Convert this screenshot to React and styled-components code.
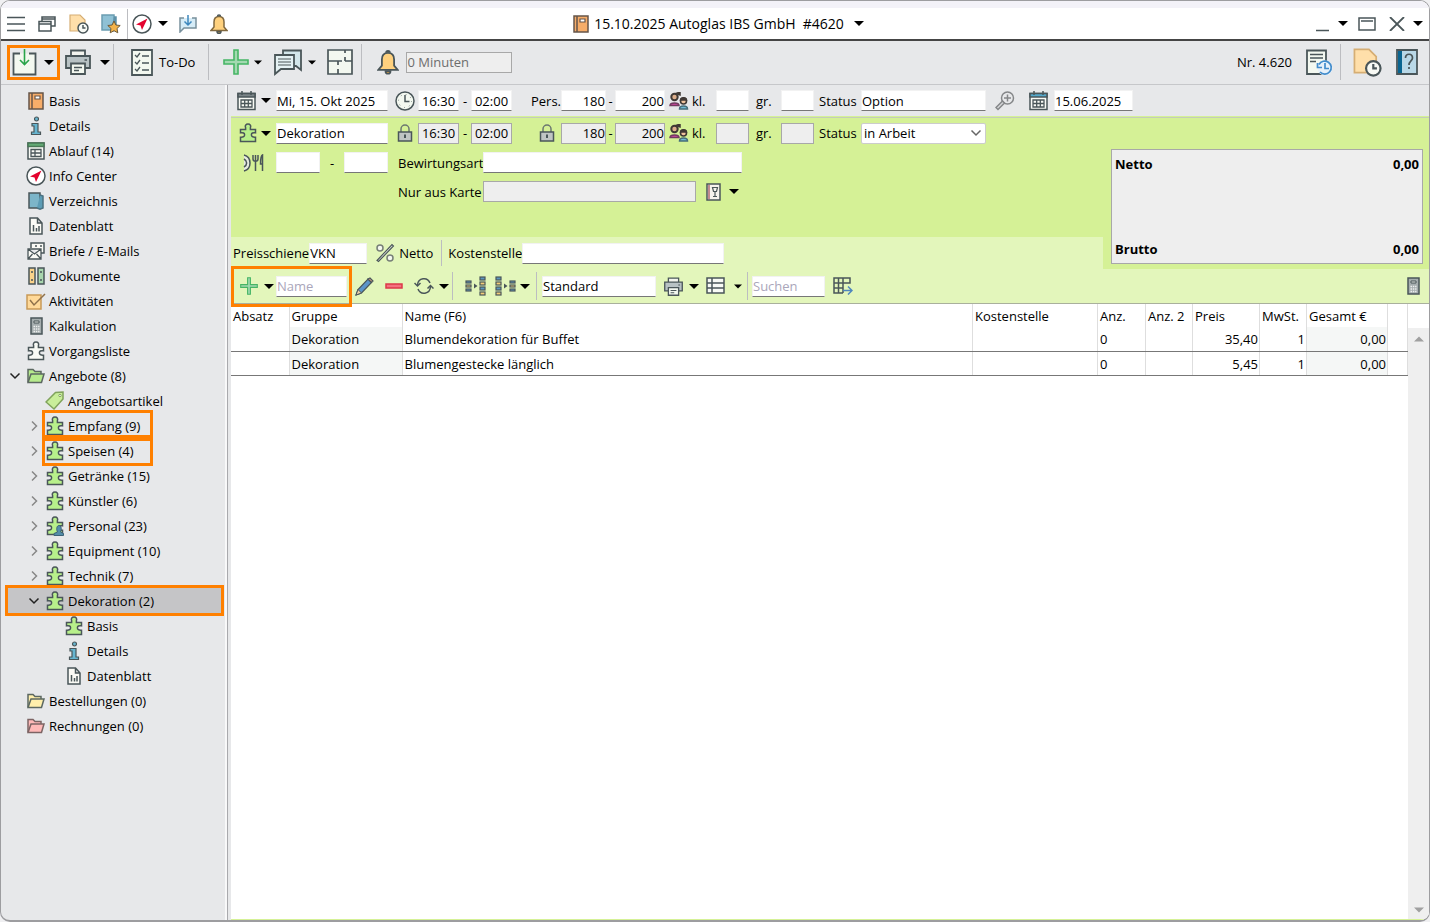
import React, { useState } from 'react';
import styled, { createGlobalStyle, css } from 'styled-components';

const GlobalStyle = createGlobalStyle`
  * {
    box-sizing: border-box;
  }

  body {
    margin: 0;
    background: #f0f0f2;
    color: #000;
    font-family: "Open Sans", "Noto Sans", sans-serif;
    font-size: 13px;
    line-height: 18px;
  }

  button, input, select {
    font: inherit;
    color: inherit;
  }

  svg {
    flex: none;
  }
`;

const ink = '#4a5659';
const orange = '#ff8000';

const Window = styled.div`
  min-height: 100vh;
  display: flex;
  flex-direction: column;
  border: 1px solid #9d9da0;
  border-bottom-width: 2px;
  border-radius: 10px;
  overflow: hidden;
  background: #e7e8ea;
`;

const TitleBar = styled.header`
  display: grid;
  grid-template-columns: 1fr auto 1fr;
  align-items: center;
  height: 40px;
  border-top: 7px solid #f3f2f8;
  border-bottom: 2px solid #454545;
  background: #fff;
`;

const BarGroup = styled.div`
  display: flex;
  align-items: center;
  justify-content: ${({ $end }) => ($end ? 'flex-end' : 'flex-start')};
`;

const Title = styled.h1`
  display: flex;
  align-items: center;
  gap: 5px;
  margin: 0;
  padding-left: 12px;
  font-size: 14px;
  font-weight: 400;
  white-space: pre;
`;

const IconButton = styled.button`
  display: inline-flex;
  flex: none;
  align-items: center;
  justify-content: center;
  width: ${({ $w }) => $w || 20}px;
  height: 28px;
  padding: 0;
  border: 0;
  background: none;
  cursor: pointer;
`;

const Divider = styled.span`
  flex: none;
  width: 1px;
  height: ${({ $h }) => $h || 36}px;
  background: #bcbdc1;
`;

const Toolbar = styled.div`
  display: flex;
  align-items: center;
  justify-content: space-between;
  height: 44px;
  padding-bottom: 1px;
  border-bottom: 1px solid #c6c7ca;
`;

const ToolGroup = styled.div`
  display: flex;
  align-items: center;
  gap: ${({ $gap }) => $gap || 0}px;
  padding: 0 ${({ $pad }) => $pad || 0}px;
  padding-left: ${({ $pad, $left }) => $left || $pad || 0}px;
`;

const SaveBox = styled.div`
  display: flex;
  align-items: center;
  height: 35px;
  margin-left: 6px;
  border: 3px solid ${orange};
`;

const TextButton = styled.button`
  display: flex;
  align-items: center;
  gap: ${({ $gap }) => $gap || 6}px;
  padding: 0;
  border: 0;
  background: none;
  cursor: pointer;
`;

const Body = styled.div`
  flex: 1;
  display: flex;
`;

const Sidebar = styled.nav`
  flex: none;
  width: 227px;
  padding-top: 3px;
  border-right: 1px solid #a9a9ad;
  box-shadow: inset -2px 0 #f8f8f9;
`;

const Tree = styled.ul`
  margin: 0;
  padding: 0;
  list-style: none;
`;

const TreeRow = styled.li`
  display: flex;
  align-items: center;
  height: 25px;
  margin: 0 6px 0 7px;
  padding-left: ${({ $level }) => $level * 19}px;
  ${({ $active }) => $active && css`
    background: #c5c5c7;
    outline: 3px solid ${orange};
  `}
`;

const Expander = styled.button`
  display: flex;
  align-items: center;
  width: 18px;
  height: 20px;
  padding: 0 0 0 1px;
  border: 0;
  background: none;
`;

const TreeLink = styled.a`
  display: flex;
  align-items: center;
  height: 25px;
  color: #000;
  text-decoration: none;
  white-space: nowrap;
  ${({ $marked }) => $marked && css`
    min-width: 105px;
    outline: 3px solid ${orange};
  `}
`;

const TreeIcon = styled.span`
  display: flex;
  justify-content: center;
  width: 20px;
  margin-right: 3px;
`;

const Main = styled.main`
  flex: 1;
  min-width: 0;
  display: flex;
  flex-direction: column;
  margin-left: 3px;
`;

const FieldGrid = styled.div`
  display: grid;
  grid-template-columns:
    20px 20px 112px 30px 41px 12px 41px 49px 45px 9px 50px 27px 24px 33px
    32px 33px 47px 125px 37px 31px 79px;
  align-items: center;
  height: ${({ $h }) => $h}px;
  padding-left: 5px;
  white-space: nowrap;
`;

const Cell = styled.span`
  display: flex;
  align-items: center;
  justify-content: ${({ $align }) => $align || 'center'};
  padding-left: ${({ $left }) => $left || 0}px;
`;

const Label = styled.label`
  padding-left: ${({ $pad }) => $pad || 0}px;
  text-align: ${({ $align }) => $align || 'left'};
  white-space: nowrap;
`;

const Field = styled.input`
  width: ${({ $w }) => ($w ? `${$w}px` : '100%')};
  min-width: 0;
  height: 21px;
  padding: 0;
  border: 1px solid #f2f2f2;
  border-bottom-color: #777;
  border-radius: 0;
  background: #fff;
  outline: none;
  text-align: ${({ $align }) => $align || 'left'};

  &::placeholder {
    color: #aaa6ba;
    opacity: 1;
  }

  &:read-only {
    border-color: #a8a8a8;
    background: #eeeeee;
  }
`;

const ReminderField = styled(Field)`
  color: #6d6d6d;
  margin-left: 2px;
`;

const SelectBox = styled.span`
  display: grid;
  align-items: center;

  select, svg {
    grid-area: 1 / 1;
  }

  svg {
    justify-self: end;
    margin-right: 4px;
    pointer-events: none;
  }
`;

const Select = styled.select`
  width: 100%;
  height: 21px;
  padding: 0 2px;
  border: 1px solid #ccc;
  border-radius: 2px;
  background: #fff;
  appearance: none;
`;

const OfferPanel = styled.section`
  display: grid;
  grid-template-columns: minmax(0, 1fr) 326px;
  background: #d5f196;
  border-top: 1px solid #d5f196;
`;

const OfferFields = styled.div`
  display: flex;
  flex-direction: column;
  border-top: 1px solid #c4cdb8;
`;

const CateringGrid = styled.div`
  display: grid;
  grid-template-columns: 45px 112px 95px 1fr;
  grid-auto-rows: 29px;
  align-items: center;
  height: 89px;
`;

const TimeSpan = styled.div`
  display: flex;
  align-items: center;
  justify-content: space-between;
`;

const PriceBar = styled.div`
  display: flex;
  align-items: center;
  height: 32px;
  padding-left: 2px;
  background: #e3f6bb;
`;

const SummaryWrap = styled.div`
  display: flex;
  padding: 31px 6px 5px 8px;
  border-top: 1px solid #c4cdb8;
`;

const Summary = styled.dl`
  flex: 1;
  display: grid;
  grid-template-columns: 1fr auto;
  align-content: space-between;
  margin: 0;
  padding: 5px 3px;
  border: 1px solid #a8a8a8;
  background: #eeeeee;
  font-weight: 700;

  dd {
    margin: 0;
  }
`;

const ItemBar = styled.div`
  display: flex;
  align-items: center;
  justify-content: space-between;
  height: 35px;
  border-bottom: 1px solid #a9b09c;
  background: #e3f6bb;
`;

/* the outline has to stay above the table below */
const AddBox = styled.div`
  position: relative;
  z-index: 1;
  display: flex;
  align-items: center;
  width: 115px;
  height: 35px;
  margin: 0 3px;
  padding-left: 2px;
  outline: 3px solid ${orange};
`;

const TableArea = styled.div`
  flex: 1;
  display: grid;
  grid-template-columns: minmax(0, 1fr) 21px;
  background: #fff;
  border-bottom: 1px solid #d5f196;
`;

const Table = styled.table`
  align-self: start;
  width: 100%;
  table-layout: fixed;
  border-collapse: collapse;

  th, td {
    height: 24px;
    padding: 1px 2px 0;
    border-right: 1px solid #dedede;
    text-align: left;
    font-weight: 400;
    white-space: nowrap;
  }

  th {
    height: 23px;
  }

  td {
    border-bottom: 1px solid #777;
  }

  td:nth-child(2), td:nth-child(9) {
    background: #f5f7f6;
  }

  td:nth-child(n + 7) {
    padding-right: 1px;
    text-align: right;
  }
`;

const ScrollTrack = styled.div`
  display: flex;
  flex-direction: column;
  justify-content: space-between;
  align-items: center;
  margin-top: 24px;
  padding: 7px 0 5px;
  background: #efefef;
`;

const Drawing = ({ w = 18, h = w, box, children }) => (
  <svg
    width={w}
    height={h}
    viewBox={box || `0 0 ${w} ${h}`}
    fill="none"
    stroke={ink}
    strokeWidth="1.5"
    aria-hidden="true"
  >
    {children}
  </svg>
);

const Triangle = ({ up, small, color = '#000' }) => (
  <Drawing w={small ? 8 : 10} h={up === undefined ? 5 : 8} box="0 0 10 5">
    <path d={up ? 'M5 0L10 5H0z' : 'M0 0H10L5 5z'} fill={color} stroke="none" />
  </Drawing>
);

const Caret = ({ w = 16, small, label = 'Auswahl' }) => (
  <IconButton $w={w} aria-label={label}><Triangle small={small} /></IconButton>
);

const Clock = ({ x, y, r = 6, color = ink }) => (
  <g stroke={color}>
    <circle cx={x} cy={y} r={r} fill="#f8faf5" />
    <path d={`M${x} ${y - r + 2}V${y}H${x + r - 2.5}`} />
  </g>
);

const Menu = () => (
  <Drawing w={18} h={16}><path d="M0 1.5H18M0 8H18M0 14.5H18" /></Drawing>
);

const Windows = () => (
  <Drawing w={18} h={16}>
    <path d="M4 5V1H17V10H13M4 3H17" />
    <path d="M1 5.5H13V15H1zM1 8H13" fill="#fff" />
  </Drawing>
);

const FolderClock = ({ size = 20 }) => (
  <Drawing w={size} box="0 0 20 20">
    <path d="M1 1H11L16 6V17H1z" fill="#ffdfaa" stroke="#d6ae74" strokeWidth="1.2" />
    <Clock x={14} y={14} r={5} />
  </Drawing>
);

const BookStar = () => (
  <Drawing w={20}>
    <path d="M1 1H13V16H1z" fill="#8fc1d5" stroke="#6b9db1" />
    <path d="M13 3h2v12l-3 2-2-1" fill="#5e91a8" stroke="#5e91a8" />
    <path d="M13 7l1.9 4 4.3.5-3.2 3 .8 4.3-3.8-2.1-3.8 2.1.8-4.3-3.2-3 4.3-.5z" fill="#f3b34a" stroke="#6b5a3b" strokeWidth="1" />
  </Drawing>
);

const Compass = () => (
  <Drawing w={20}>
    <circle cx="10" cy="10" r="9" fill="#fff" />
    <path d="M15.5 4.5L4 10.5l4.5 1 1.5 4.5z" fill="#e4032e" stroke="none" />
  </Drawing>
);

const Inbox = () => (
  <Drawing w={18}>
    <path d="M5 3H1V17l4-4H17V3H13" fill="#d6ecf7" stroke="#78909c" />
    <path d="M9 0V10M5.5 6.5L9 10l3.5-3.5" stroke="#3d87bd" />
  </Drawing>
);

const Bell = ({ w = 18, h = 20 }) => (
  <Drawing w={w} h={h} box="0 0 18 20">
    <path d="M7 17.5a2 2 0 0 0 4 0z" fill="#e7a443" />
    <path d="M9 2.5C5.5 2.5 4 5 4 8V13L1 16.5H17L14 13V8C14 5 12.5 2.5 9 2.5z" fill="#ffd17e" stroke={w > 18 ? ink : '#80683f'} />
    <path d="M7.5 2.5a1.5 1.5 0 0 1 3 0" />
  </Drawing>
);

const Book = () => (
  <Drawing w={16} h={18}>
    <path d="M1 1H15V17H1z" fill="#f7ad69" stroke="#65554a" />
    <path d="M4 1V17" stroke="#65554a" />
    <path d="M7 4H12V7H7z" fill="#fff" stroke="#65554a" strokeWidth="1.2" />
  </Drawing>
);

const Save = () => (
  <Drawing w={26} h={28}>
    <path d="M8 5.5H1.5V26.5H23.5V5.5H17" fill="#f3f8f0" strokeWidth="1.8" />
    <path d="M12.5 1V16M8 12l4.500 4.500L17 12" stroke="#29a44a" strokeWidth="1.6" />
  </Drawing>
);

const Printer = ({ w = 26, h = 26 }) => (
  <Drawing w={w} h={h} box="0 0 26 26">
    <path d="M6 7V1.5H20V7" fill="#f3f4ee" strokeWidth="1.8" />
    <path d="M1 7H25V19H1z" fill="#b8c2c4" strokeWidth="1.8" />
    <path d="M6 14.5H20V25H6z" fill="#f3f8f0" strokeWidth="1.8" />
    <path d="M9 18.5H17M9 21.5H14M19.5 11H22" strokeWidth="1.6" />
  </Drawing>
);

const Checklist = () => (
  <Drawing w={22} h={27}>
    <path d="M1 1H21V26H1z" fill="#f3f8f0" strokeWidth="1.8" />
    <path d="M4 6l2 2 3-4M4 13l2 2 3-4M4 20l2 2 3-4M11 7H18M11 14H18M11 21H18" strokeWidth="1.3" />
  </Drawing>
);

const Plus = ({ size = 26 }) => (
  <Drawing w={size} box="0 0 26 26">
    <path d="M11 1H15V11H25V15H15V25H11V15H1V11H11z" fill="#a3d9b1" stroke="#46b565" strokeWidth="1.6" />
  </Drawing>
);

const Chat = () => (
  <Drawing w={28} h={27}>
    <path d="M9 1.5H27V21l-5-4H9z" fill="#d3e6ea" strokeWidth="1.8" />
    <path d="M1 6H20V20H7L1 25z" fill="#e4f1f3" strokeWidth="1.8" />
    <path d="M4 10H17M4 13H17M4 16H17" strokeWidth="1.2" />
  </Drawing>
);

const FloorPlan = () => (
  <Drawing w={26}>
    <path d="M1 1H25V25H1zM1 12H15M11 12V16M11 20V25M18 12H25M18 1V4M18 8V12" fill="#f3f8f0" strokeWidth="1.7" />
  </Drawing>
);

const DocHistory = () => (
  <Drawing w={27}>
    <path d="M1 1.5H20V25H1z" fill="#f3f8f0" strokeWidth="1.8" />
    <path d="M4 5.5H17M4 9H17M4 12.5H10" />
    <circle cx="19" cy="19" r="7.5" fill="#e7f1fa" stroke="none" />
    <path d="M13 15.5A6.5 6.5 0 1 1 14 23M11.5 14V18.5H16M19 14V19.5H23" stroke="#438dcc" strokeWidth="1.7" />
  </Drawing>
);

const Help = () => (
  <Drawing w={22} h={26}>
    <path d="M1 1H21V25H1z" fill="#b9d8e7" strokeWidth="1.8" />
    <path d="M2 2H6V24H2z" fill="#0a6590" stroke="none" />
    <path d="M9.5 9C9.5 4 16.5 4 16.5 9C16.5 12 13 12 13 16M13 18V20" strokeWidth="1.7" />
  </Drawing>
);

const Info = () => (
  <Drawing w={14} h={20}>
    <circle cx="7.5" cy="3" r="2" fill="#67b5d0" strokeWidth="1.2" />
    <path d="M3 7.5H9V16H11.5V18.5H2.5V16H5V10H3z" fill="#67b5d0" strokeWidth="1.2" />
  </Drawing>
);

const Schedule = () => (
  <Drawing w={18}>
    <path d="M1 1H17V17H1z" fill="#f8faf5" />
    <path d="M1 1H17V4.5H1z" fill="#63aa75" stroke="#4a7757" />
    <path d="M4 7.5H14V14.5H4zM4 11H14M8 7.5V14.5" strokeWidth="1.3" />
  </Drawing>
);

const Directory = () => (
  <Drawing w={16} h={18}>
    <path d="M1 1H12V16H1z" fill="#7cb5c9" />
    <path d="M12 3l3 1V16l-3 1.2L9 16" fill="#5c9cb5" stroke="#4b7282" />
  </Drawing>
);

const DataSheet = () => (
  <Drawing w={14} h={18}>
    <path d="M1 1H8.5L13 6V17H1zM8.5 1V6H13" fill="#fafaf5" />
    <path d="M4.5 8V14.5M7.5 11V14.5M10 9V14.5" />
  </Drawing>
);

const Mail = () => (
  <Drawing w={18}>
    <path d="M4 6V1H17V11H14M8 4H10M13 4H15" fill="#fafaf5" />
    <path d="M1 7H14V17H1zM1 7l6.5 5L14 7M1 17l4.5-5M14 17l-4.5-5" fill="#fafaf5" strokeWidth="1.3" />
  </Drawing>
);

const Binders = () => (
  <Drawing w={17} h={18}>
    <path d="M1 1H7V17H1z" fill="#fbd38b" />
    <path d="M10 1H16V17H10z" fill="#a9d6ae" />
    <path d="M4 4V6M4 12V14M13 4V6M13 12V14" />
  </Drawing>
);

const Task = () => (
  <Drawing w={20} h={18}>
    <path d="M1 3H15V17H1z" fill="#ffd999" stroke="#c99957" />
    <path d="M4 8l4 5L19 2" stroke="#8f714b" />
  </Drawing>
);

const Calculator = () => (
  <Drawing w={13} h={18}>
    <path d="M1 1H12V17H1z" fill="#a5adae" />
    <path d="M4 4H9V6H4z" fill="#dfe3e0" strokeWidth="1" />
    <path d="M3.5 9.5H9.5M3.5 12H9.5M3.5 14.5H9.5" stroke="#eef0ef" strokeDasharray="1.5 .8" />
  </Drawing>
);

const Puzzle = ({ fill = '#b8f08b', person }) => (
  <Drawing w={18} h={20}>
    <path
      d="M9 1C6.8 1 5.8 2.8 6.6 4.6V6.5H1.5V9.8C4.400 9.200 5.600 10.300 5.600 11.800S4.400 14.400 1.500 14.200V18.500H16.500V14.200C13.600 14.400 12.400 13.300 12.400 11.800S13.600 9.200 16.500 9.800V6.500H11.400V4.600C12.200 2.800 11.200 1 9 1z"
      fill={fill}
    />
    {person && (
      <path d="M8 19.5V17.5L11.5 16C10 13 10.8 9.5 13 9.5S16 13 14.500 16L17.5 17.5V19.5z" fill="#538da9" stroke="#3d6277" strokeWidth="1" />
    )}
  </Drawing>
);

const Folder = ({ fill, edge = '#5c6861' }) => (
  <Drawing w={18} h={16}>
    <path d="M1 14V1.5H6L8 3.5H14V6" fill={fill} stroke={edge} />
    <path d="M1 14.5L4 6H17L14.5 14.5z" fill={fill} stroke={edge} />
  </Drawing>
);

const Tag = () => (
  <Drawing w={20}>
    <path d="M1 11L10.5 1.5L18 1V8L9 18z" fill="#c9ee9a" stroke="#80a35c" />
    <circle cx="15" cy="4.5" r="1.2" fill="#fff" stroke="#80a35c" strokeWidth="1" />
  </Drawing>
);

const Chevron = ({ open, color = '#222' }) => (
  <Drawing w={12}>
    {open
      ? <path d="M1.5 3.5L6 8l4.5-4.5" stroke={color} />
      : <path d="M4 1.5L8.5 6L4 10.5" stroke="#888" />}
  </Drawing>
);

const Calendar = ({ top = '#7b8588' }) => (
  <Drawing w={19} h={20}>
    <path d="M1 2.5H18V18.5H1z" fill="#f8faf5" />
    <path d="M1 2.5H18V6H1z" fill={top} />
    <path d="M5 0V4M14 0V4" />
    <path d="M4 9H15V16H4zM4 12.5H15M7.7 9V16M11.3 9V16" strokeWidth="1.3" />
  </Drawing>
);

const BigClock = () => (
  <Drawing w={20}>
    <circle cx="10" cy="10" r="9" fill="#f3f8f0" />
    <path d="M10 4V10.5H14.5" />
    <circle cx="10" cy="10" r="6.5" strokeWidth=".8" strokeDasharray=".8 4.3" />
  </Drawing>
);

const Lock = () => (
  <Drawing w={16} h={18}>
    <path d="M4 8V5a4 4 0 0 1 8 0V8" stroke="#6b7770" />
    <path d="M1.5 8H14.5V17H1.5z" fill="#c0c5c4" />
    <path d="M8 10.5V14" strokeWidth="2" />
  </Drawing>
);

const People = () => (
  <Drawing w={20} h={18}>
    <circle cx="5.5" cy="5" r="3.2" fill="#dcae8b" stroke="#403935" strokeWidth="2" />
    <path d="M7 1.5L11 0V3z" fill="#403935" stroke="#403935" />
    <path d="M1 13.5C1 10 10 10 10 13.5z" fill="#d648a4" stroke="#713c60" />
    <circle cx="14.5" cy="9" r="3" fill="#f0c39d" stroke="#403935" strokeWidth="1.6" />
    <path d="M11.5 8C12 5 17 5 17.5 8z" fill="#403935" stroke="#403935" />
    <path d="M10.5 17C10.5 13 18.5 13 18.5 17z" fill="#72bcd6" stroke="#466e7b" />
  </Drawing>
);

const ZoomIn = () => (
  <Drawing w={20}>
    <circle cx="12.5" cy="7" r="6" stroke="#858789" />
    <path d="M12.5 3.5V10.5M9 7H16" stroke="#858789" />
    <path d="M7.5 10L1 16.5l2 2L9.5 12z" stroke="#858789" fill="#d5d6d8" />
  </Drawing>
);

const Cutlery = () => (
  <Drawing w={21} h={18}>
    <path d="M1 1C9 3 9 15 1 17M1 5C4.500 7 4.500 11 1 13" fill="#e6ebe0" />
    <path d="M10 1V5C10 8 15 8 15 5V1M12.500 1V17M19.500 17V1C17.500 2 17.500 7 17.500 10H19.500" />
  </Drawing>
);

const WineMenu = () => (
  <Drawing w={15} h={18}>
    <path d="M1 1H14V17H1z" fill="#f6f3ee" />
    <path d="M2 2H4V16H2z" fill="#c28b91" stroke="none" />
    <path d="M6.5 4.5H11.5L10.5 8.5H7.5zM9 8.5V13.5M7 13.5H11" strokeWidth="1.2" />
  </Drawing>
);

const Percent = () => (
  <Drawing w={20}>
    <path d="M2 17.5L17 1.5l1.5 1.5L3.5 18.5z" fill="#d9dfd5" strokeWidth="1.1" />
    <circle cx="5" cy="5" r="3" fill="#f4f8ee" stroke="#777f78" />
    <circle cx="15" cy="15" r="3" fill="#f4f8ee" stroke="#777f78" />
  </Drawing>
);

const Pencil = () => (
  <Drawing w={19}>
    <path d="M1 18L3 12.500L13 2l3.500 3.500L6.500 16z" fill="#5c95c9" strokeWidth="1.2" />
    <path d="M13 2l2-1 3 3-1.500 1.500z" fill="#d9a58b" strokeWidth="1.2" />
    <path d="M1 18L3 12.500l3.500 3.500z" fill="#ecd2a5" strokeWidth="1" />
  </Drawing>
);

const Minus = () => (
  <Drawing w={18} h={6}><path d="M1 1H17V5H1z" fill="#f4717f" stroke="#dc3949" /></Drawing>
);

const Refresh = () => (
  <Drawing w={20} h={18}>
    <path d="M3.5 8C4 .5 13.5-.5 16 6M16.5 9.5C16 17.5 6.5 18.5 4 12" />
    <path d="M.5 6L3.5 9L6.5 6M13.5 11.5L16.5 8.5l3 3" />
  </Drawing>
);

const blocks = ['#5b96bd', '#f3cc78', '#5b96bd', '#f3cc78'];

const Columns = ({ flip }) => (
  <Drawing w={22} h={20}>
    {blocks.map((fill, i) => (
      <rect key={i} x={flip ? 1 : 15} y={1 + i * 5} width="5" height="3" fill={fill} strokeWidth="1.2" />
    ))}
    {[0, 1, 2].map((i) => (
      <rect key={i} x={flip ? 15 : 1} y={5 + i * 4} width="5" height="2" fill={blocks[i]} strokeWidth="1.2" />
    ))}
    <path d="M9 7.5L12.5 10L9 12.5z" fill={ink} stroke="none" />
  </Drawing>
);

const Grid = ({ arrow }) => (
  <Drawing w={20} h={18}>
    <path d={arrow ? 'M10 16H1V1H17V6H1M1 11H10M5.5 1V16M10 1V16' : 'M1 1H18V16H1zM1 6H18M1 11H18M6 1V16'} fill={arrow ? 'none' : '#f8faf5'} />
    {arrow && <path d="M10 13.5H18.5M15 9.5l4 4-4 4" stroke="#4f87bd" />}
  </Drawing>
);

const treeItems = [
  { label: 'Basis', icon: <Book /> },
  { label: 'Details', icon: <Info /> },
  { label: 'Ablauf (14)', icon: <Schedule /> },
  { label: 'Info Center', icon: <Compass /> },
  { label: 'Verzeichnis', icon: <Directory /> },
  { label: 'Datenblatt', icon: <DataSheet /> },
  { label: 'Briefe / E-Mails', icon: <Mail /> },
  { label: 'Dokumente', icon: <Binders /> },
  { label: 'Aktivitäten', icon: <Task /> },
  { label: 'Kalkulation', icon: <Calculator /> },
  { label: 'Vorgangsliste', icon: <Puzzle fill="#f8faf5" /> },
  { label: 'Angebote (8)', icon: <Folder fill="#b6ea8d" />, open: true },
  { label: 'Angebotsartikel', icon: <Tag />, level: 1 },
  { label: 'Empfang (9)', icon: <Puzzle />, level: 1, open: false, marked: true },
  { label: 'Speisen (4)', icon: <Puzzle />, level: 1, open: false, marked: true },
  { label: 'Getränke (15)', icon: <Puzzle />, level: 1, open: false },
  { label: 'Künstler (6)', icon: <Puzzle />, level: 1, open: false },
  { label: 'Personal (23)', icon: <Puzzle person />, level: 1, open: false },
  { label: 'Equipment (10)', icon: <Puzzle />, level: 1, open: false },
  { label: 'Technik (7)', icon: <Puzzle />, level: 1, open: false },
  { label: 'Dekoration (2)', icon: <Puzzle />, level: 1, open: true },
  { label: 'Basis', icon: <Puzzle />, level: 2 },
  { label: 'Details', icon: <Info />, level: 2 },
  { label: 'Datenblatt', icon: <DataSheet />, level: 2 },
  { label: 'Bestellungen (0)', icon: <Folder fill="#ffefac" /> },
  { label: 'Rechnungen (0)', icon: <Folder fill="#ffb9b8" edge="#7d6464" /> },
];

const columns = [
  ['Absatz', 58], ['Gruppe', 113], ['Name (F6)', null], ['Kostenstelle', 125], ['Anz.', 48],
  ['Anz. 2', 47], ['Preis', 67], ['MwSt.', 47], ['Gesamt €', 81], ['', 20],
];

const rows = [
  ['', 'Dekoration', 'Blumendekoration für Buffet', '', '0', '', '35,40', '1', '0,00', ''],
  ['', 'Dekoration', 'Blumengestecke länglich', '', '0', '', '5,45', '1', '0,00', ''],
];

const SideTree = () => {
  const [active, setActive] = useState(20);

  return (
    <Sidebar aria-label="Vorgang">
      <Tree>
        {treeItems.map((item, i) => (
          <TreeRow key={i} $level={item.level || 0} $active={active === i}>
            <Expander as={item.open === undefined ? 'span' : 'button'} aria-label={item.open === undefined ? undefined : item.label}>
              {item.open !== undefined && <Chevron open={item.open} />}
            </Expander>
            <TreeLink href="#" $marked={item.marked} onClick={() => setActive(i)}>
              <TreeIcon>{item.icon}</TreeIcon>
              {item.label}
            </TreeLink>
          </TreeRow>
        ))}
      </Tree>
    </Sidebar>
  );
};

const PersonFields = ({ id, locked }) => (
  <>
    <Cell $left={3}>{locked ? <Lock /> : <BigClock />}</Cell>
    <Field defaultValue="16:30" $align="center" readOnly={locked} aria-label="Beginn" />
    <Cell>-</Cell>
    <Field defaultValue="02:00" $align="center" readOnly={locked} aria-label="Ende" />
    {locked
      ? <Cell $left={20}><Lock /></Cell>
      : <Label htmlFor={`${id}-pers`} $align="right">Pers.</Label>}
    <Field id={`${id}-pers`} defaultValue="180" $align="right" readOnly={locked} aria-label="Personen von" />
    <Cell>-</Cell>
    <Field defaultValue="200" $align="right" readOnly={locked} aria-label="Personen bis" />
    <Cell><People /></Cell>
    <Label htmlFor={`${id}-kl`}>kl.</Label>
    <Field id={`${id}-kl`} readOnly={locked} />
    <Label htmlFor={`${id}-gr`} $pad={7}>gr.</Label>
    <Field id={`${id}-gr`} readOnly={locked} />
    <Label htmlFor={`${id}-status`} $pad={5}>Status</Label>
  </>
);

const App = () => (
  <Window>
    <GlobalStyle />
    <TitleBar>
      <BarGroup>
        <IconButton $w={30} aria-label="Menü"><Menu /></IconButton>
        <IconButton $w={32} aria-label="Fenster"><Windows /></IconButton>
        <IconButton $w={31} aria-label="Verlauf"><FolderClock /></IconButton>
        <IconButton $w={33} aria-label="Favoriten"><BookStar /></IconButton>
        <Divider $h={30} />
        <IconButton $w={27} aria-label="Info Center"><Compass /></IconButton>
        <Caret />
        <IconButton $w={34} aria-label="Eingang"><Inbox /></IconButton>
        <IconButton $w={28} aria-label="Erinnerungen"><Bell /></IconButton>
      </BarGroup>
      <Title>
        <Book />
        {'15.10.2025 Autoglas IBS GmbH  #4620'}
        <Caret w={20} />
      </Title>
      <BarGroup $end>
        <IconButton $w={33} aria-label="Minimieren">
          <Drawing w={14} h={16}><path d="M0 14.5H13" /></Drawing>
        </IconButton>
        <Caret w={8} />
        <IconButton $w={40} aria-label="Maximieren">
          <Drawing w={18} h={14}><path d="M1 1H17V13H1zM3 4H15" /></Drawing>
        </IconButton>
        <IconButton $w={20} aria-label="Schließen">
          <Drawing w={16} h={14}><path d="M1 0L15 14M15 0L1 14" strokeWidth="1.8" /></Drawing>
        </IconButton>
        <Caret w={22} />
      </BarGroup>
    </TitleBar>

    <Toolbar>
      <ToolGroup>
        <SaveBox>
          <IconButton $w={30} aria-label="Speichern"><Save /></IconButton>
          <Caret w={17} />
        </SaveBox>
        <IconButton $w={36} aria-label="Drucken"><Printer /></IconButton>
        <Caret w={17} />
        <Divider />
        <ToolGroup $pad={13} $left={17}>
          <TextButton><Checklist />To-Do</TextButton>
        </ToolGroup>
        <Divider />
        <ToolGroup $pad={3} $left={9} $gap={6}>
          <ToolGroup>
            <IconButton $w={36} aria-label="Neu"><Plus /></IconButton>
            <Caret w={8} small />
          </ToolGroup>
          <ToolGroup>
            <IconButton $w={40} aria-label="Nachrichten"><Chat /></IconButton>
            <Caret w={8} small />
          </ToolGroup>
          <IconButton $w={36} aria-label="Raumplan"><FloorPlan /></IconButton>
        </ToolGroup>
        <Divider />
        <ToolGroup $pad={10}>
          <IconButton $w={32} aria-label="Erinnerung"><Bell w={22} h={26} /></IconButton>
          <ReminderField $w={106} defaultValue="0 Minuten" readOnly aria-label="Erinnerung in Minuten" />
        </ToolGroup>
      </ToolGroup>
      <ToolGroup>
        <ToolGroup $gap={6}>
          Nr. 4.620
          <IconButton $w={42} aria-label="Historie"><DocHistory /></IconButton>
        </ToolGroup>
        <Divider />
        <IconButton $w={52} aria-label="Verlauf"><FolderClock size={29} /></IconButton>
        <IconButton $w={28} aria-label="Hilfe"><Help /></IconButton>
        <ToolGroup $pad={4} />
      </ToolGroup>
    </Toolbar>

    <Body>
      <SideTree />
      <Main>
        <FieldGrid $h={31}>
          <Cell><Calendar /></Cell>
          <Caret w={20} />
          <Field defaultValue="Mi, 15. Okt 2025" aria-label="Datum" />
          <PersonFields id="event" />
          <Field id="event-status" defaultValue="Option" />
          <Cell><ZoomIn /></Cell>
          <Cell><Calendar top="#55a9cb" /></Cell>
          <Field defaultValue="15.06.2025" aria-label="Optionsdatum" />
        </FieldGrid>

        <OfferPanel>
          <OfferFields>
            <FieldGrid $h={30}>
              <Cell $left={3}><Puzzle /></Cell>
              <Caret w={20} />
              <Field defaultValue="Dekoration" aria-label="Bezeichnung" />
              <PersonFields id="offer" locked />
              <SelectBox>
                <Select id="offer-status" defaultValue="in Arbeit">
                  <option>in Arbeit</option>
                </Select>
                <Chevron open color="#666" />
              </SelectBox>
            </FieldGrid>
            <CateringGrid>
              <Cell><Cutlery /></Cell>
              <TimeSpan>
                <Field $w={44} aria-label="Service von" />
                -
                <Field $w={44} aria-label="Service bis" />
              </TimeSpan>
              <Label htmlFor="service" $pad={10}>Bewirtungsart</Label>
              <Cell $align="flex-start"><Field id="service" $w={259} /></Cell>
              <span />
              <span />
              <Label htmlFor="card" $pad={10}>Nur aus Karte</Label>
              <Cell $align="flex-start">
                <Field id="card" $w={213} readOnly />
                <IconButton $w={34} aria-label="Karte"><WineMenu /></IconButton>
                <Caret w={8} />
              </Cell>
            </CateringGrid>
            <PriceBar>
              <ToolGroup>
                <Label htmlFor="price">Preisschiene</Label>
                <Field id="price" $w={58} defaultValue="VKN" />
              </ToolGroup>
              <ToolGroup $pad={8}>
                <TextButton $gap={4}><Percent />Netto</TextButton>
              </ToolGroup>
              <Divider $h={26} />
              <ToolGroup $pad={6}>
                <Label htmlFor="cost">Kostenstelle</Label>
                <Field id="cost" $w={202} />
              </ToolGroup>
            </PriceBar>
          </OfferFields>
          <SummaryWrap>
            <Summary>
              <dt>Netto</dt>
              <dd>0,00</dd>
              <dt>Brutto</dt>
              <dd>0,00</dd>
            </Summary>
          </SummaryWrap>
        </OfferPanel>

        <ItemBar>
          <ToolGroup>
            <AddBox>
              <IconButton $w={26} aria-label="Hinzufügen"><Plus size={18} /></IconButton>
              <Caret w={14} />
              <Field $w={71} placeholder="Name" aria-label="Name" />
            </AddBox>
            <IconButton $w={24} aria-label="Bearbeiten"><Pencil /></IconButton>
            <IconButton $w={36} aria-label="Entfernen"><Minus /></IconButton>
            <IconButton $w={24} aria-label="Aktualisieren"><Refresh /></IconButton>
            <Caret />
            <Divider $h={28} />
            <ToolGroup $pad={6}>
              <IconButton $w={33} aria-label="Einrücken"><Columns /></IconButton>
              <IconButton $w={28} aria-label="Ausrücken"><Columns flip /></IconButton>
              <Caret w={10} />
            </ToolGroup>
            <Divider $h={28} />
            <ToolGroup $pad={5}>
              <Field $w={114} defaultValue="Standard" aria-label="Ansicht" />
              <IconButton $w={34} aria-label="Drucken"><Printer w={19} h={19} /></IconButton>
              <Caret w={8} />
              <IconButton $w={36} aria-label="Tabelle"><Grid /></IconButton>
              <Caret w={8} small />
            </ToolGroup>
            <Divider $h={28} />
            <ToolGroup $pad={4}>
              <Field $w={73} placeholder="Suchen" aria-label="Suchen" />
              <IconButton $w={36} aria-label="Exportieren"><Grid arrow /></IconButton>
            </ToolGroup>
          </ToolGroup>
          <IconButton $w={32} aria-label="Rechner"><Calculator /></IconButton>
        </ItemBar>

        <TableArea>
          <Table>
            <colgroup>
              {columns.map(([name, width]) => <col key={name} width={width || undefined} />)}
            </colgroup>
            <thead>
              <tr>{columns.map(([name]) => <th key={name} scope="col">{name}</th>)}</tr>
            </thead>
            <tbody>
              {rows.map((row) => (
                <tr key={row[2]}>{row.map((value, i) => <td key={i}>{value}</td>)}</tr>
              ))}
            </tbody>
          </Table>
          <ScrollTrack>
            <Triangle up color="#a0a0a0" />
            <Triangle up={false} color="#a0a0a0" />
          </ScrollTrack>
        </TableArea>
      </Main>
    </Body>
  </Window>
);

export default App;
